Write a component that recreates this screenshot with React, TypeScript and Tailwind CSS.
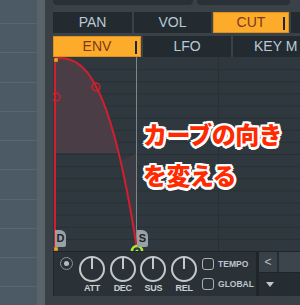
import React from 'react'

const leftRows = Array.from({ length: 11 })

// decay curve: y = 1 + 191 * t^2.76 (graph coordinates)
const curve = Array.from({ length: 41 }, (_, i) => {
  const t = i / 40
  return [2 + 82 * t, 1 + 191 * Math.pow(t, 2.76)] as const
})
const curveD = curve.map(([x, y], i) => `${i ? 'L' : 'M'}${x.toFixed(2)} ${y.toFixed(2)}`).join(' ')
const fillTop = `${curveD} L2 192 Z`
const lower = curve.filter(([, y]) => y >= 96)
const fillLow = `M${lower.map(([x, y]) => `${x.toFixed(2)} ${y.toFixed(2)}`).join(' L')} L84 96 Z`

function Tab({ label, active, w, pl }: { label: string; active?: boolean; w: string; pl?: string }) {
  return (
    <div
      className={`relative flex h-full shrink-0 items-center overflow-hidden whitespace-nowrap text-[14px] ${w} ${
        pl ? `${pl} justify-start` : 'justify-center'
      } ${active ? 'bg-[#fdab2b] text-[#7a3a1c] border border-[#e0901c]' : 'bg-[#242b30] text-[#b6cad8]'}`}
    >
      {label}
      {active && <span className="absolute right-[3px] top-[4px] h-[13px] w-[2px] bg-[#1b2833]" />}
    </div>
  )
}

function Knob({ label }: { label: string }) {
  return (
    <div className="flex w-[28px] shrink-0 flex-col items-center">
      <svg width="28" height="28" viewBox="0 0 28 28">
        <circle cx="14" cy="14" r="12" fill="none" stroke="#c3c8cc" strokeWidth="2" />
        <line x1="14" y1="14" x2="14" y2="2.5" stroke="#c3c8cc" strokeWidth="2" />
      </svg>
      <span className="mt-[1px] text-[9px] font-bold leading-[9px] tracking-[-0.3px] text-[#c9d0d6]">{label}</span>
    </div>
  )
}

function Check({ label }: { label: string }) {
  return (
    <div className="flex items-center gap-[4px]">
      <span className="h-[12px] w-[12px] rounded-[3px] border-[1.5px] border-[#a9b1b7]" />
      <span className="text-[8.5px] font-bold leading-[10px] text-[#bcc5cc]">{label}</span>
    </div>
  )
}

export default function App() {
  return (
    <div className="flex h-[305px] w-[300px] overflow-hidden bg-[#394046] font-['Liberation_Sans',sans-serif]">
      {/* channel list on the left */}
      <div className="flex w-[37px] shrink-0 flex-col bg-[#4b5a64]">
        <div className="h-[24px] shrink-0 border-b border-[#576770]" />
        {leftRows.map((_, i) => (
          <div key={i} className="h-[29.25px] shrink-0 border-b border-[#576770]" />
        ))}
      </div>
      <div className="w-[8px] shrink-0 bg-[#5a6369]" />
      <div className="w-[8px] shrink-0 bg-[#394147]" />

      <div className="flex min-w-0 flex-1 flex-col bg-[#3a4248]">
        {/* top buttons edge */}
        <div className="flex h-[12px] shrink-0 gap-[4px]">
          <div className="h-[5px] w-[140px] rounded-b-[4px] bg-[#2a3136]" />
          <div className="h-[5px] w-[93px] rounded-b-[4px] bg-[#2a3136]" />
        </div>

        <div className="flex h-[21px] shrink-0 gap-[2px]">
          <Tab label="PAN" w="w-[79px]" />
          <Tab label="VOL" w="w-[77px]" />
          <Tab label="CUT" w="w-[76px]" active />
          <Tab label="" w="w-[60px]" />
        </div>
        <div className="h-[3px] shrink-0" />
        <div className="flex h-[21px] shrink-0 gap-[2px]">
          <Tab label="ENV" w="w-[88px]" active />
          <Tab label="LFO" w="w-[88px]" />
          <Tab label="KEY M" w="w-[88px]" pl="pl-[21px]" />
        </div>

        {/* envelope graph */}
        <div className="relative h-[194px] shrink-0 overflow-hidden bg-[#2f383e]">
          <svg className="absolute left-0 top-0" width="247" height="194" viewBox="0 0 247 194">
            {Array.from({ length: 15 }, (_, i) => (
              <line key={i} x1="0" x2="247" y1={12.125 * (i + 1) + 0.5} y2={12.125 * (i + 1) + 0.5} stroke="#283035" strokeWidth="1" />
            ))}
            <line x1="165.5" x2="165.5" y1="0" y2="194" stroke="#283035" strokeWidth="1" />
            <path d={fillTop} fill="#4a3d45" clipPath="url(#topHalf)" />
            <path d={fillLow} fill="#3b3c43" />
            <defs>
              <clipPath id="topHalf">
                <rect x="0" y="0" width="247" height="96" />
              </clipPath>
            </defs>
            <line x1="83.5" x2="83.5" y1="0" y2="194" stroke="#7e868c" strokeWidth="1" />
            <line x1="2" x2="2" y1="1" y2="192" stroke="#d21f2f" strokeWidth="2" />
            <path d={curveD} fill="none" stroke="#d21f2f" strokeWidth="2" />
            <circle cx="43" cy="30" r="4" fill="none" stroke="#d21f2f" strokeWidth="1.5" />
            <circle cx="3" cy="40" r="4" fill="none" stroke="#d21f2f" strokeWidth="1.5" />
            <rect x="1" y="1" width="4" height="4" fill="#f4a62c" stroke="#6b4a1a" strokeWidth="0.5" />
            <rect x="1" y="190" width="4" height="4" fill="#f4a62c" stroke="#6b4a1a" strokeWidth="0.5" />
            <circle cx="84" cy="194" r="5" fill="#2f383e" stroke="#a8ee2c" strokeWidth="2.5" />
            <circle cx="84" cy="194" r="1.5" fill="#a8ee2c" />
          </svg>

          {/* point badges */}
          <div className="absolute left-[2px] top-[173px] flex h-[17px] w-[11px] items-center justify-center rounded-tr-[6px] rounded-br-[2px] bg-[#99a1a7] text-[11px] font-bold text-[#1e2428]">
            D
          </div>
          <div className="absolute left-[84px] top-[173px] flex h-[17px] w-[11px] items-center justify-center rounded-tr-[6px] rounded-br-[2px] bg-[#99a1a7] text-[11px] font-bold text-[#1e2428]">
            S
          </div>

          {/* annotation */}
          <div className="absolute left-[90px] top-[56px] whitespace-nowrap font-['Noto_Sans_CJK_JP',sans-serif] text-[24px] font-black leading-[41px] tracking-[-0.6px] text-[#ff2a00] [text-shadow:2.5px_0_0_#fff,-2.5px_0_0_#fff,0_2.5px_0_#fff,0_-2.5px_0_#fff,1.8px_1.8px_0_#fff,-1.8px_1.8px_0_#fff,1.8px_-1.8px_0_#fff,-1.8px_-1.8px_0_#fff]">
            <div>カーブの向き</div>
            <div>を変える</div>
          </div>
        </div>

        {/* knobs row */}
        <div className="flex h-[45px] shrink-0">
          <div className="flex w-[203px] shrink-0 border-l border-t border-[#1f2529] bg-[#2b3237]">
            <div className="ml-[6px] mt-[5px] flex h-[13px] w-[13px] shrink-0 items-center justify-center rounded-full border-[1.5px] border-[#8a9298]">
              <span className="h-[5px] w-[5px] rounded-full bg-[#b4bcc2]" />
            </div>
            <div className="ml-[5px] mt-[3px] flex gap-[2.7px]">
              <Knob label="ATT" />
              <Knob label="DEC" />
              <Knob label="SUS" />
              <Knob label="REL" />
            </div>
            <div className="ml-[4px] mt-[6px] flex flex-col gap-[8px]">
              <Check label="TEMPO" />
              <Check label="GLOBAL" />
            </div>
          </div>
          <div className="flex flex-1 flex-col border-l-[3px] border-t border-[#1f2529] bg-[#262d32]">
            <div className="flex h-[21px] shrink-0 gap-[2px] border-b border-[#1f2529]">
              <div className="flex w-[18px] items-center justify-center bg-[#384147] text-[12px] text-[#b8c0c6]">&lt;</div>
              <div className="flex-1 bg-[#3c454b]" />
            </div>
            <div className="flex flex-1 items-center pl-[7px]">
              <span className="h-0 w-0 border-x-[4px] border-t-[5px] border-x-transparent border-t-[#c0c8ce]" />
            </div>
          </div>
        </div>
        <div className="flex-1 bg-[#394046]" />
      </div>
    </div>
  )
}
